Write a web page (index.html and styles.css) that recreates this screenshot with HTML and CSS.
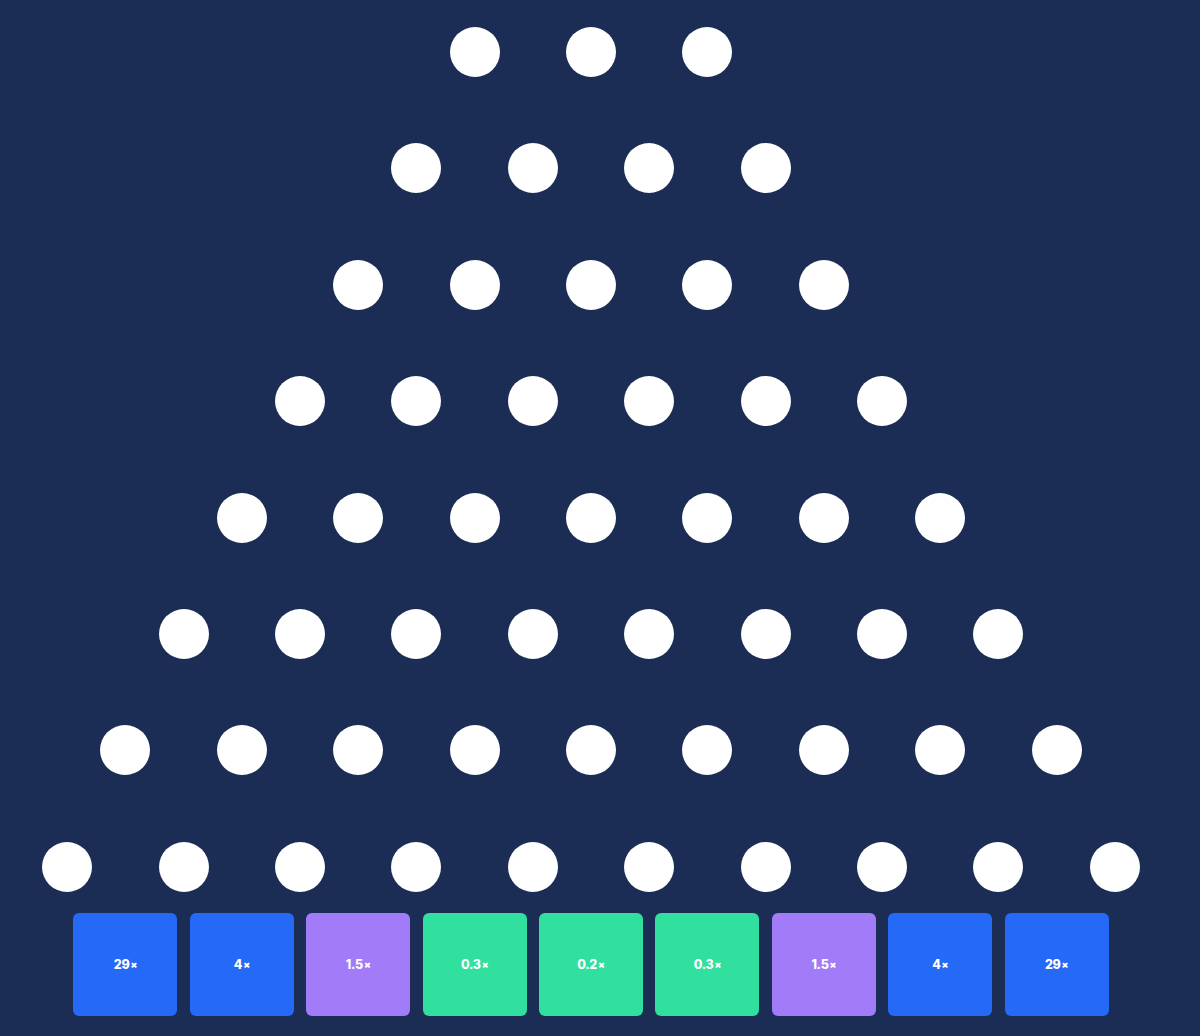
FILE: index.html
```html
<!DOCTYPE html>
<html lang="en">
<head>
  <meta charset="UTF-8">
  <meta name="viewport" content="width=device-width, initial-scale=1.0">
  <title>Plinko</title>
  <link rel="stylesheet" href="styles.css">
</head>
<body>
  <div class="board">
    <div class="pegs">
      <div class="row"><span class="peg"></span><span class="peg"></span><span class="peg"></span></div>
      <div class="row"><span class="peg"></span><span class="peg"></span><span class="peg"></span><span class="peg"></span></div>
      <div class="row"><span class="peg"></span><span class="peg"></span><span class="peg"></span><span class="peg"></span><span class="peg"></span></div>
      <div class="row"><span class="peg"></span><span class="peg"></span><span class="peg"></span><span class="peg"></span><span class="peg"></span><span class="peg"></span></div>
      <div class="row"><span class="peg"></span><span class="peg"></span><span class="peg"></span><span class="peg"></span><span class="peg"></span><span class="peg"></span><span class="peg"></span></div>
      <div class="row"><span class="peg"></span><span class="peg"></span><span class="peg"></span><span class="peg"></span><span class="peg"></span><span class="peg"></span><span class="peg"></span><span class="peg"></span></div>
      <div class="row"><span class="peg"></span><span class="peg"></span><span class="peg"></span><span class="peg"></span><span class="peg"></span><span class="peg"></span><span class="peg"></span><span class="peg"></span><span class="peg"></span></div>
      <div class="row"><span class="peg"></span><span class="peg"></span><span class="peg"></span><span class="peg"></span><span class="peg"></span><span class="peg"></span><span class="peg"></span><span class="peg"></span><span class="peg"></span><span class="peg"></span></div>
    </div>

    <div class="buckets">
      <div class="bucket high">29<small>×</small></div>
      <div class="bucket high">4<small>×</small></div>
      <div class="bucket mid">1.5<small>×</small></div>
      <div class="bucket low">0.3<small>×</small></div>
      <div class="bucket low">0.2<small>×</small></div>
      <div class="bucket low">0.3<small>×</small></div>
      <div class="bucket mid">1.5<small>×</small></div>
      <div class="bucket high">4<small>×</small></div>
      <div class="bucket high">29<small>×</small></div>
    </div>
  </div>
</body>
</html>
```

FILE: styles.css
```css
html, body {
  height: 100%;
}

body {
  margin: 0;
  padding: 0;
  background: #1b2d55;
  font-family: 'Inter', 'Lato', sans-serif;
  color: white;
  overflow: hidden;
}

.board {
  width: 1182px;
  padding-top: 27px;
}

.pegs {
  display: flex;
  flex-direction: column;
  gap: 66.4px;
}

.row {
  display: flex;
  justify-content: center;
  gap: 66.4px;
}

.peg {
  width: 50px;
  height: 50px;
  border-radius: 50%;
  background: #ffffff;
}

.buckets {
  display: flex;
  justify-content: center;
  gap: 12.4px;
  margin-top: 21px;
}

.bucket {
  width: 104px;
  height: 103px;
  border-radius: 6px;
  display: flex;
  align-items: center;
  justify-content: center;
  font-size: 12.5px;
  font-weight: 800;
  letter-spacing: -0.3px;
}

.bucket small {
  font-size: 10px;
  font-weight: 900;
  margin-left: 1px;
}

.high {
  background: #256af6;
}

.mid {
  background: #a27bf8;
}

.low {
  background: #31df9f;
}
```
